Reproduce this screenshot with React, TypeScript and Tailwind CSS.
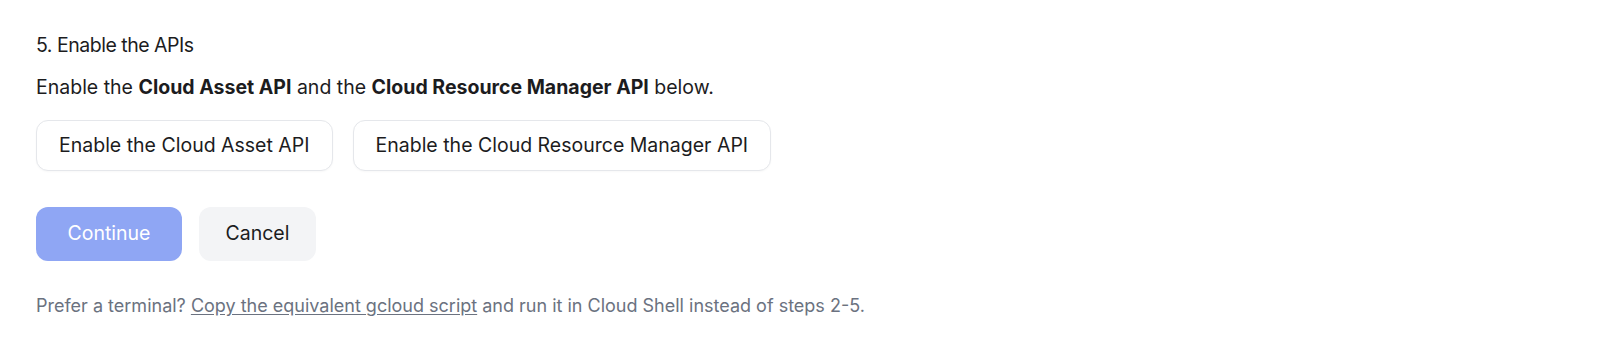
import React from 'react';

const App: React.FC = () => {
  const apis = ['Enable the Cloud Asset API', 'Enable the Cloud Resource Manager API'];

  return (
    <div className="min-h-screen bg-white font-['Inter',sans-serif] text-[#1c1c1e] pl-9 pt-[31px]">
      {/* Step heading */}
      <h2 className="text-[19.5px] leading-7 font-normal tracking-tight">5. Enable the APIs</h2>
      <p className="mt-[14px] text-[19.5px] leading-7">
        Enable the <span className="font-bold">Cloud Asset API</span> and the{' '}
        <span className="font-bold">Cloud Resource Manager API</span> below.
      </p>

      {/* API buttons */}
      <div className="mt-[19px] flex gap-5">
        {apis.map((label) => (
          <button
            key={label}
            className="h-[51px] px-[22px] rounded-xl border border-[#e5e7eb] bg-white text-[19.5px] shadow-[0_1px_2px_rgba(0,0,0,0.03)]"
          >
            {label}
          </button>
        ))}
      </div>

      {/* Actions */}
      <div className="mt-9 flex gap-[17px]">
        <button className="h-[54px] w-[146px] rounded-xl bg-[#8fa6f4] text-white text-[19.5px]" disabled>
          Continue
        </button>
        <button className="h-[54px] w-[117px] rounded-xl bg-[#f3f4f6] text-[19.5px]">Cancel</button>
      </div>

      <p className="mt-[33px] text-[18px] leading-6 text-[#6b7280]">
        Prefer a terminal?{' '}
        <a href="#" className="underline underline-offset-2">
          Copy the equivalent gcloud script
        </a>{' '}
        and run it in Cloud Shell instead of steps 2-5.
      </p>
    </div>
  );
};

export default App;
